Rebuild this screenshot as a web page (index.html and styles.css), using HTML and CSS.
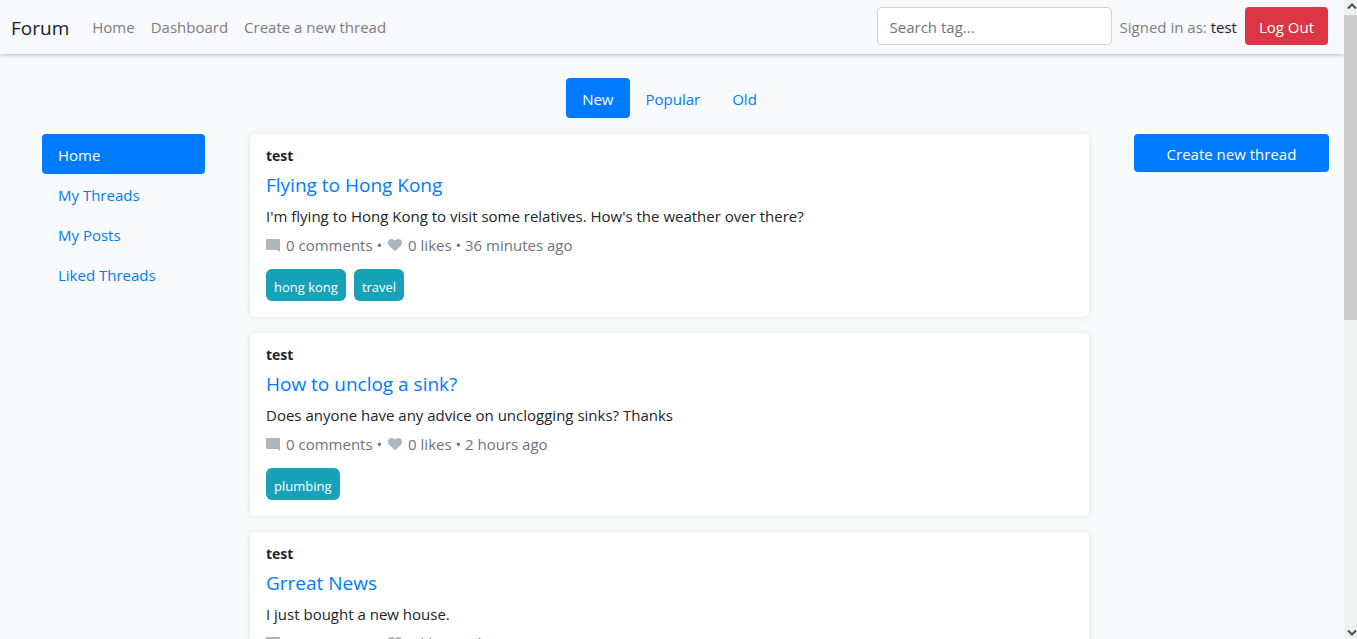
FILE: index.html
```html
<!DOCTYPE html>
<html lang="en">
<head>
<meta charset="utf-8">
<meta name="viewport" content="width=device-width, initial-scale=1">
<title>Forum</title>
<link rel="stylesheet" href="styles.css">
</head>
<body>
<svg class="sprite" aria-hidden="true">
  <symbol id="icon-comment" viewBox="0 0 14 14"><path d="M1.2 1h11.600c.7 0 1.200.5 1.200 1.200V14l-2.500-2H1.200C.5 12 0 11.500 0 10.800V2.200C0 1.500.5 1 1.200 1z"/></symbol>
  <symbol id="icon-heart" viewBox="0 0 14 14"><path d="M7 13.300 1.300 7.900C-.6 6-.4 3.200 1.200 1.800 2.900.4 5.400.8 7 2.600 8.600.8 11.100.4 12.800 1.800c1.600 1.400 1.800 4.200-.1 6.100z"/></symbol>
</svg>
<div class="page">
  <header class="navbar">
    <a class="brand" href="#">Forum</a>
    <nav class="navbar-links" aria-label="Main">
      <a href="#">Home</a>
      <a href="#">Dashboard</a>
      <a href="#">Create a new thread</a>
    </nav>
    <form class="navbar-tools">
      <input class="search" type="text" placeholder="Search tag..." aria-label="Search tag">
      <span class="signed-in">Signed in as: <a href="#">test</a></span>
      <button class="button button-danger" type="button">Log Out</button>
    </form>
  </header>
  <div class="layout">
    <nav class="tabs" aria-label="Sort threads">
      <a class="pill active" href="#">New</a>
      <a class="pill" href="#">Popular</a>
      <a class="pill" href="#">Old</a>
    </nav>
    <nav class="sidebar" aria-label="Sections">
      <a class="pill active" href="#">Home</a>
      <a class="pill" href="#">My Threads</a>
      <a class="pill" href="#">My Posts</a>
      <a class="pill" href="#">Liked Threads</a>
    </nav>
    <main class="threads">
      <article class="card">
        <strong class="author">test</strong>
        <h2 class="title"><a href="#">Flying to Hong Kong</a></h2>
        <p class="text">I'm flying to Hong Kong to visit some relatives. How's the weather over there?</p>
        <p class="meta"><svg class="icon"><use href="#icon-comment"/></svg><span>0 comments •</span><svg class="icon"><use href="#icon-heart"/></svg><span>0 likes • 36 minutes ago</span></p>
        <div class="tags"><a class="tag" href="#">hong kong</a><a class="tag" href="#">travel</a></div>
      </article>
      <article class="card">
        <strong class="author">test</strong>
        <h2 class="title"><a href="#">How to unclog a sink?</a></h2>
        <p class="text">Does anyone have any advice on unclogging sinks? Thanks</p>
        <p class="meta"><svg class="icon"><use href="#icon-comment"/></svg><span>0 comments •</span><svg class="icon"><use href="#icon-heart"/></svg><span>0 likes • 2 hours ago</span></p>
        <div class="tags"><a class="tag" href="#">plumbing</a></div>
      </article>
      <article class="card">
        <strong class="author">test</strong>
        <h2 class="title"><a href="#">Grreat News</a></h2>
        <p class="text">I just bought a new house.</p>
        <p class="meta"><svg class="icon"><use href="#icon-comment"/></svg><span>0 comments •</span><svg class="icon"><use href="#icon-heart"/></svg><span>0 likes • 2 hours ago</span></p>
      </article>
    </main>
    <aside class="actions">
      <button class="button button-primary" type="button">Create new thread</button>
    </aside>
  </div>
</div>
<div class="scrollbar" aria-hidden="true">
  <svg class="arrow" viewBox="0 0 13 14"><path d="M4 8 8 4l4 4"/></svg>
  <div class="track"><div class="thumb"></div></div>
  <svg class="arrow" viewBox="0 0 13 14"><path d="M4 6l4 4 4-4"/></svg>
</div>
</body>
</html>
```
FILE: styles.css
```css
* { box-sizing: border-box; }

body {
  display: flex;
  height: 100vh;
  margin: 0;
  overflow: hidden;
  background: #f8fafc;
  color: #212529;
  font: 15px/24px "Open Sans", "Noto Sans", sans-serif;
}

a { color: #007bff; text-decoration: none; }

.sprite { position: absolute; width: 0; height: 0; }

.page { flex: 1; min-width: 0; overflow: hidden; }

.navbar {
  display: flex;
  align-items: center;
  padding: 7px 16px 9px 11px;
  background: #f8f9fc;
  box-shadow: 0 1px 4px rgba(0, 0, 0, 0.25);
}

.brand { margin-right: 23px; padding-top: 3px; color: #1b1c1e; font-size: 19px; }

.navbar-links { display: flex; gap: 16px; padding-top: 2px; }
.navbar-links a { color: #7c7d7e; }

.navbar-tools { display: flex; align-items: center; gap: 8px; margin-left: auto; }

.search {
  width: 235px;
  height: 38px;
  padding: 2px 12px 0;
  border: 1px solid #ced4da;
  border-radius: 4px;
  background: #fff;
  color: #495057;
  font: inherit;
}
.search::placeholder { color: #6c757d; opacity: 1; }

.signed-in { padding-top: 2px; color: #7c7d7e; }
.signed-in a { color: #1b1c1e; }

.button {
  height: 38px;
  padding: 2px 14px 0;
  border: 0;
  border-radius: 4px;
  color: #fff;
  font: inherit;
}
.button-danger { background: #dc3545; }
.button-primary { width: 100%; background: #007bff; }

.layout {
  display: grid;
  grid-template-columns: 163fr 839fr 195fr;
  gap: 16px 45px;
  padding: 24px 15px 0 42px;
}

.tabs { display: flex; justify-content: center; grid-column: 2; }
.sidebar { grid-column: 1; }

.pill { display: block; padding: 9px 16px 7px; border-radius: 4px; }
.pill.active { background: #007bff; color: #fff; }

.threads { display: grid; gap: 16px; }

.card {
  padding: 10px 16px 16px;
  border-radius: 5px;
  background: #fff;
  box-shadow: 0 0 6px rgba(0, 0, 0, 0.1);
}

.author { display: block; font-size: 14px; }
.title { margin: 5px 0 7px; font-size: 19px; font-weight: 400; }
.text { margin: 0 0 5px; }
.meta { display: flex; align-items: center; gap: 6px; margin: 0 0 12px; color: #6c757d; }
.icon { width: 14px; height: 14px; fill: #adb5bd; }

.tags { display: flex; gap: 8px; }
.tag {
  padding: 8px 8px 4px;
  border-radius: 6px;
  background: #17a2b8;
  color: #fff;
  font-size: 13px;
  line-height: 20px;
}

.scrollbar { display: flex; flex-direction: column; width: 13px; background: #eff0f0; }
.arrow { width: 13px; height: 15px; fill: none; stroke: #505050; stroke-width: 2; }
.track { flex: 1; }
.thumb { height: 50%; background: #cdcdcd; }
```
